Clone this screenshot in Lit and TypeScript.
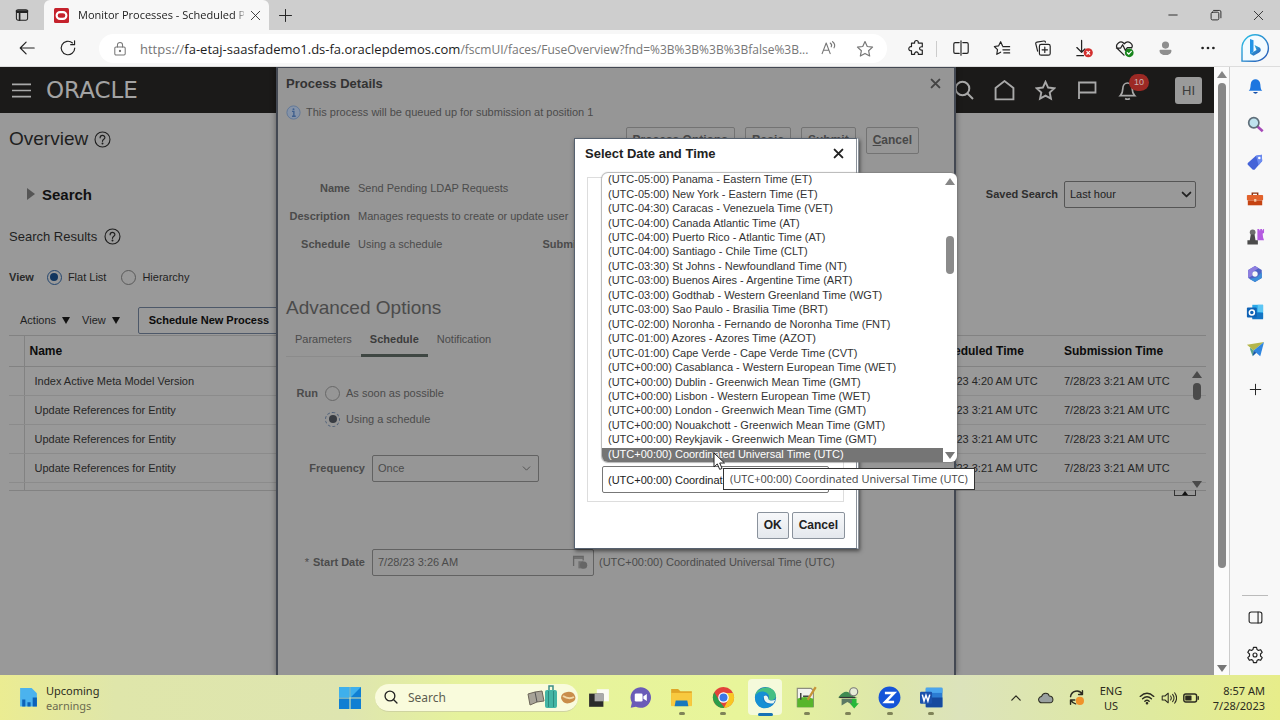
import { LitElement, html, css, svg } from "lit";
import { customElement } from "lit/decorators.js";
import { classMap } from "lit/directives/class-map.js";

const line = (body: unknown, size = 18) => html`<svg
  class="line" width=${size} height=${size} viewBox="0 0 20 20" aria-hidden="true">${body}</svg>`;
const art = (body: unknown, size = 18) => html`<svg
  width=${size} height=${size} viewBox="0 0 20 20" aria-hidden="true">${body}</svg>`;

const STAR = "M10 1.8 12.5 7.2 18.4 7.9 14 11.9 15.2 17.8 10 14.9 4.8 17.8 6 11.9 1.6 7.9 7.5 7.2Z";

const icons = {
  tabs: line(svg`<rect x="3" y="3.500" width="14" height="13" rx="2"/><path d="M3 5h14M3.500 6.500h13M7 6v10.500" stroke-width="2"/>`, 16),
  back: line(svg`<path d="M18 10H2.500M9 3.500 2.500 10 9 16.500"/>`),
  refresh: line(svg`<path d="M17.500 10A7.500 7.500 0 1 1 15 4.400M17.300 2v4.300H13"/>`),
  lock: line(svg`<rect x="3.500" y="7.500" width="13" height="10" rx="1.500"/><path d="M6.800 7.500V5a3.200 3.200 0 0 1 6.400 0v2.500"/><circle cx="10" cy="12.500" r=".8" fill="currentColor"/>`, 16),
  read: line(svg`<path d="m2.500 16 4.800-12.500L12 16M4.200 12h6.200M12 3.500c1.500 1 2 3 1.200 4.500M14.800 2c2.300 1.800 3 4.800 1.700 7.200"/>`, 17),
  star: line(svg`<path d=${STAR}/>`, 18),
  puzzle: line(svg`<path d="M5 4.500h3.500c-.8-3.800 4.800-3.800 4 0H17v4.200c-4-.8-4 4.400 0 3.600V17h-4.500c.8-3.500-4.800-3.500-4 0H5v-4c-4 .8-4-5.300 0-4.500Z"/>`),
  split: line(svg`<path d="M8 4H3.500a1.500 1.500 0 0 0-1.500 1.500v9A1.500 1.500 0 0 0 3.500 16H8M12 4h4.500A1.500 1.500 0 0 1 18 5.500v9a1.500 1.500 0 0 1-1.500 1.500H12M10 2v16"/>`),
  favs: line(svg`<path d="M10.500 7.500 8.500 3 6.300 7.600 1.500 8.300 5 11.800 4.200 17 8.500 14.600M11 8.500h7.500M11 12h7.500M12 15.500h6.500"/>`),
  collect: line(svg`<rect x="6" y="6" width="12" height="12" rx="2"/><path d="M12 9v6M9 12h6M4 13.500 2 5.500a1.500 1.500 0 0 1 1.200-2L11 2.200a1.500 1.500 0 0 1 1.700 1.300"/>`),
  download: line(svg`<path d="M8 1.500v12M3 9l5 5 3.500-3.500M3 17.500h7"/><circle cx="15" cy="14.500" r="4.800" fill="#d3302f" stroke="none"/><path d="m13.500 13 3 3m0-3-3 3" stroke="#fff"/>`, 19),
  heart: line(svg`<path d="M9.500 17 2.500 10C-.5 5.500 6 .5 9.800 5 13.600.5 20 5 17.500 9.500M1.500 9.500H6L8 6l3 6 2-3h4"/><circle cx="15" cy="14.500" r="4.600" fill="#17851c" stroke="none"/><path d="m13 14.500 1.500 1.500 2.700-3" stroke="#fff"/>`, 19),
  person: art(svg`<circle cx="10" cy="6" r="4.200" fill="#8e8e8e"/><path d="M3 12.500q0-1 1-1h12q1 0 1 1c0 7-14 7-14 0Z" fill="#8e8e8e"/>`, 17),
  dots: art(svg`<g fill="#222"><circle cx="4" cy="10" r="1.500"/><circle cx="10" cy="10" r="1.500"/><circle cx="16" cy="10" r="1.500"/></g>`),
  bing: html`<svg width="30" height="30" viewBox="0 0 30 30" aria-hidden="true"><defs><linearGradient id="bg" x2="1" y2="1"><stop stop-color="#2bc3e8"/><stop offset="1" stop-color="#2b56b5"/></linearGradient></defs><path d="M2 28V15a13.200 13.200 0 1 1 13.200 13.200Z" fill="#f3fbff" stroke="url(#bg)" stroke-width="1.400"/><path d="m10 6 3.500 1.300v11.200l-3.500 2.500Z" fill="#2394e6"/><path d="m14.500 12 5.500 2.700q2 3.300-1.200 5l-5.300 3.100-3.500-2 6.500-3.800Z" fill="url(#bg)"/></svg>`,
  minimize: line(svg`<path d="M4 10h12"/>`, 14),
  restore: line(svg`<rect x="3" y="6" width="11" height="11" rx="2"/><path d="M6.500 3.500H15a2 2 0 0 1 2 2V14"/>`, 14),
  close: line(svg`<path d="m3.500 3.500 13 13m0-13-13 13"/>`, 13),
  plus: line(svg`<path d="M10 2v16M2 10h16"/>`, 15),
  help: line(svg`<circle cx="10" cy="10" r="8.800"/><path d="M7.200 8c0-3.800 5.600-3.600 5.600-.3 0 2.200-2.800 2-2.800 4.500" stroke-width="1.400"/><circle cx="10" cy="14.800" r=".5" fill="currentColor"/>`, 17),
  menu: line(svg`<path d="M0 3.500h20M0 10h20M0 16.500h20" stroke-width="1.700"/>`, 19),
  search: line(svg`<circle cx="8.500" cy="8.500" r="6.800"/><path d="m13.500 13.500 5.500 5.500"/>`, 20),
  home: line(svg`<path d="M1.500 18.500V7.500L10 1l8.500 6.500v11Z"/>`, 21),
  flag: line(svg`<path d="M2 19V2.500h16.500v10H2"/>`, 20),
  bell: line(svg`<path d="M2.500 15.500c2-2 2.500-3 2.500-7C5 0 15 0 15 8.500c0 4 .5 5 2.500 7ZM7.500 18.500q2.500 1.500 5 0"/>`, 19),
  info: art(svg`<circle cx="10" cy="10" r="8.800" fill="#8593a8" stroke="#5f7697" stroke-width="1.200"/><path d="M8 8.500h2.500V15M8 15h5" stroke="#3f5f8d" stroke-width="1.800" fill="none"/><circle cx="10" cy="5.500" r="1.300" fill="#3f5f8d"/>`, 15),
  calendar: art(svg`<path d="M2 15V3h12v5M2 5h12" stroke="#666" stroke-width="1.600" fill="none"/><path d="M8 9h6v9H8z" fill="#707070"/><circle cx="14.500" cy="14" r="4.500" fill="#666"/>`, 16),
  panel: line(svg`<rect x="2.500" y="3.500" width="15" height="13" rx="2.500"/><path d="M13 3.500v13"/>`, 17),
  gear: line(svg`<path d="M8.300 1.500h3.400l.6 2.500 1.500.9 2.500-.8 1.700 3-1.900 1.800v2.200l1.900 1.800-1.700 3-2.500-.8-1.500.9-.6 2.500H8.300L7.700 16l-1.500-.9-2.500.8-1.700-3 1.900-1.800V8.900L2 7.100l1.700-3 2.500.8L7.700 4Z"/><circle cx="10" cy="10" r="2.200"/>`, 18),
};

const sideIcons: [string, unknown][] = [
  ["Notifications", art(svg`<path d="M2 15c2-1.500 2-4 2.300-7.500C5-.5 15-.5 15.700 7.500 16 11 16 13.500 18 15Z" fill="#1c76e0"/><path d="M7 16.500h6q-3 4-6 0" fill="#174fa8"/>`, 17)],
  ["Search", art(svg`<path d="m12 12 6.500 6" stroke="#a64ab8" stroke-width="3"/><circle cx="8" cy="8" r="6" fill="#bfe3ef" stroke="#5f6f7a" stroke-width="2"/>`, 17)],
  ["Shopping", art(svg`<path d="M2 11 11 3l6.500-1 .5 7-8.500 9.500q-1.500.5-2.500-.5l-5-5q-.6-1 0-2Z" fill="#4563d8"/><path d="m11 3 6.500-1 .5 7-4 4.500Z" fill="#6c8cf0"/><circle cx="14.800" cy="5.600" r="1.400" fill="#fff"/>`, 18)],
  ["Tools", art(svg`<path d="M7 6V3.500h6V6" fill="none" stroke="#8a3312" stroke-width="1.600"/><rect x="1" y="5.500" width="18" height="6" rx="1" fill="#e2622c"/><path d="M2 11.500h16V17H2z" fill="#c54312"/><path d="M9 10h2.500v3H9z" fill="#f5c9a5"/>`, 18)],
  ["Games", art(svg`<path d="M12 2h2v1.500h1V2h2v1.500h1V2h1v4l-1.500 1 .5 4 1 3h-7Z" fill="#b45be0"/><circle cx="7" cy="5.500" r="3" fill="#6d6d6d"/><path d="M5 8h4l1 6h2.500v4.500H1.500V14H4Z" fill="#4b4b4b"/>`, 19)],
  ["Microsoft 365", art(svg`<path d="m10 1 7.500 4.500v9L10 19l-7.500-4.500v-9Z" fill="#4e63c4"/><path d="M10 1 2.500 5.500v9L7 12V8l7-4.500Z" fill="#8f7ee0"/><path d="M17.500 8v6.500L10 19l-6-3.500 8-2Z" fill="#3d8fd8"/><circle cx="10" cy="10" r="3" fill="#f8f8f8"/>`, 18)],
  ["Outlook", art(svg`<path d="M7 2h12v15H7z" fill="#2aa8e8"/><path d="M13 2h6v8h-6z" fill="#5cc6f5"/><path d="m7 10 12 1v7H7Z" fill="#1474c4"/><rect x="1" y="5" width="11" height="11" rx="1" fill="#0f62b5"/><circle cx="6.500" cy="10.500" r="2.800" fill="none" stroke="#fff" stroke-width="1.700"/>`, 18)],
  ["Drop", art(svg`<path d="M1 5 19 2 8 11Z" fill="#b5b64b"/><path d="M19 2 15 17l-7-6Z" fill="#2f86e0"/><path d="m5 8.500 3 2.500-1 6-3-8Z" fill="#5aa58a"/><path d="m8 11 3 2.500-4 3.500Z" fill="#175aa8"/>`, 19)],
];

const taskIcons: [string, unknown, string][] = [
  ["Task view", art(svg`<path d="M8 2h11v11H8z" fill="#fbfbf4"/><path d="M1 6h13v12H1z" fill="#2b2b2b"/><path d="M6 6h8v7H6z" fill="#aaa"/>`, 22), ""],
  ["Chat", art(svg`<path d="M10 1a9 9 0 1 1-4 17l-4.500 1 1-4.500A9 9 0 0 1 10 1Z" fill="#6a5bb8"/><rect x="5" y="6.500" width="6.800" height="7" rx="1.200" fill="#fff"/><path d="m12.500 9 3-2v6l-3-2Z" fill="#fff"/>`, 23), ""],
  ["File Explorer", art(svg`<path d="M1 2.500h6l2 2h10V17H1Z" fill="#e0a526"/><path d="M1 6h18v11.500H1Z" fill="#f8c93f"/><path d="M5 12.500h10l1 5H4Z" fill="#1778bd"/>`, 23), "run"],
  ["Chrome", art(svg`<circle cx="10" cy="10" r="9.200" fill="#e2433a"/><path d="M2 5.400 7 14l4 5.100A9.200 9.200 0 0 1 2 5.400Z" fill="#2b9d4a"/><path d="M10 6h8.300a9.200 9.200 0 0 1-7.900 13.200L14 12Z" fill="#f9c623"/><circle cx="10" cy="10" r="4.600" fill="#fff"/><circle cx="10" cy="10" r="3.500" fill="#3a78e6"/>`, 23), "run"],
  ["Edge", art(svg`<circle cx="10" cy="10" r="9.200" fill="#1675c5"/><path d="M1 9C2-1 18-1 19 8c.5 4-4 5-6.500 4C15 5 5 4 1 9Z" fill="#45bf83"/><path d="M1 9c3-7 12-4 12 0-2-3-6-1-5 3 1 3 5 5 9 3-7 9-17 3-16-6Z" fill="#1590d4"/><path d="M8.500 9c2-2 4 0 4 2.500 1 1.500 4 1.500 6 .5l-1.500 3c-5 1-8.500-1-8.500-6Z" fill="#e9f6ee"/>`, 23), "active"],
  ["Notepad++", art(svg`<path d="M2 2h12l2 2v14H2Z" fill="#f3f3ee" stroke="#8c8c80"/><path d="M2 11q6-3 14 0v7.500H2Z" fill="#58b52c"/><path d="M5 6v6M7 9h5" stroke="#444" stroke-width="1.300"/><path d="m18 1-7 11" stroke="#c69436" stroke-width="2"/>`, 23), "run"],
  ["Network client", art(svg`<path d="M2 9Q8 1 14 9l4 1H1Z" fill="#3f8b52"/><path d="M4 11h12l-3 5-4-2-5 3Z" fill="#5c7a64"/><circle cx="14.500" cy="5" r="3.500" fill="#e6ecd6" stroke="#777"/><path d="M13 11h4v4h2l-4 4.500L11 15h2Z" fill="#27b83a"/><path d="M2 10h14" stroke="#333"/>`, 23), "run"],
  ["Zoom", art(svg`<circle cx="10" cy="10" r="9.500" fill="#1554d8"/><path d="M6 6h8L6.300 14H14" stroke="#fff" stroke-width="2.200" fill="none"/>`, 23), "run"],
  ["Word", art(svg`<rect x="5" y="1.500" width="14.500" height="17" rx="1" fill="#2b7cd3"/><path d="M5 10h14.500v8.500H5z" fill="#164a9e"/><path d="M5 1.500h14.500V6H5z" fill="#4aa5ee"/><rect x="0" y="5" width="10.500" height="10.500" rx="1" fill="#1b52ac"/><path d="m2 7.500 1.500 5.500 1.700-5 1.700 5 1.600-5.500" stroke="#fff" stroke-width="1.300" fill="none"/>`, 23), "run"],
];

const zones = [
  "(UTC-05:00) Panama - Eastern Time (ET)",
  "(UTC-05:00) New York - Eastern Time (ET)",
  "(UTC-04:30) Caracas - Venezuela Time (VET)",
  "(UTC-04:00) Canada Atlantic Time (AT)",
  "(UTC-04:00) Puerto Rico - Atlantic Time (AT)",
  "(UTC-04:00) Santiago - Chile Time (CLT)",
  "(UTC-03:30) St Johns - Newfoundland Time (NT)",
  "(UTC-03:00) Buenos Aires - Argentine Time (ART)",
  "(UTC-03:00) Godthab - Western Greenland Time (WGT)",
  "(UTC-03:00) Sao Paulo - Brasilia Time (BRT)",
  "(UTC-02:00) Noronha - Fernando de Noronha Time (FNT)",
  "(UTC-01:00) Azores - Azores Time (AZOT)",
  "(UTC-01:00) Cape Verde - Cape Verde Time (CVT)",
  "(UTC+00:00) Casablanca - Western European Time (WET)",
  "(UTC+00:00) Dublin - Greenwich Mean Time (GMT)",
  "(UTC+00:00) Lisbon - Western European Time (WET)",
  "(UTC+00:00) London - Greenwich Mean Time (GMT)",
  "(UTC+00:00) Nouakchott - Greenwich Mean Time (GMT)",
  "(UTC+00:00) Reykjavik - Greenwich Mean Time (GMT)",
  "(UTC+00:00) Coordinated Universal Time (UTC)",
];
const UTC = zones[zones.length - 1];

const rows = [
  ["Index Active Meta Model Version", "7/28/23 4:20 AM UTC", "7/28/23 3:21 AM UTC"],
  ["Update References for Entity", "7/28/23 3:21 AM UTC", "7/28/23 3:21 AM UTC"],
  ["Update References for Entity", "7/28/23 3:21 AM UTC", "7/28/23 3:21 AM UTC"],
  ["Update References for Entity", "7/28/23 3:21 AM UTC", "7/28/23 3:21 AM UTC"],
];

const base = css`
  :host, * { box-sizing: border-box; }
  button, input, select { font: inherit; color: inherit; margin: 0; }
  button { background: none; border: 0; padding: 0; }
  svg { display: block; flex: none; }
  .line { fill: none; stroke: currentColor; stroke-width: 1.3; stroke-linejoin: round; stroke-linecap: round; }
  .icon { display: grid; place-items: center; }
`;

@customElement("browser-bar")
export class BrowserBar extends LitElement {
  static styles = [base, css`
    :host { display: block; font-family: "Open Sans", sans-serif; font-size: 11px; color: #222; }
    .tabs { display: flex; height: 30px; background: #cecece; }
    .tabs > .icon { width: 44px; }
    .tab { display: flex; align-items: center; gap: 9px; width: 225px; padding: 0 7px 0 10px; background: #f7f7f7; border-radius: 6px 6px 0 0; }
    .title { flex: 1; margin-right: -4px; overflow: hidden; white-space: nowrap; height: 18px; line-height: 18px; mask-image: linear-gradient(90deg, #000 94%, #0004); }
    .tabs > .new { width: 33px; }
    .window { display: flex; margin-left: auto; }
    .window button { width: 43px; }
    .tools { display: flex; height: 37px; background: #f7f7f7; border-bottom: 1px solid #ddd; padding-left: 6px; }
    .tools .icon { width: 41px; }
    .address { flex: 1; display: flex; align-items: center; min-width: 0; height: 29px; margin: 4px 8px 0 11px; border-radius: 15px; background: #fff; color: #767676; }
    .address .url { flex: 1; min-width: 0; white-space: nowrap; overflow: hidden; font-size: 12px; }
    .scheme { font-size: 13px; }
    .address .host { color: #1c1c1c; }
    .address .read { width: 30px; }
    .address .icon:last-child { width: 44px; }
    .rule { width: 1px; height: 16px; margin: 11px 3px 0 0; background: #ccc; }
    .tools .more { width: 44px; }
    .tools .bing { width: 50px; }
  `];
  render() {
    return html`
      <div class="tabs">
        <button class="icon" aria-label="Tab actions">${icons.tabs}</button>
        <div class="tab">
          ${art(svg`<rect width="20" height="20" rx="2" fill="#c5222c"/><rect x="3.500" y="5.500" width="13" height="9" rx="4.500" fill="none" stroke="#fff" stroke-width="2.800"/>`, 15)}
          <span class="title">Monitor Processes - Scheduled P</span>
          <button class="icon" aria-label="Close tab">${icons.close}</button>
        </div>
        <button class="icon new" aria-label="New tab">${icons.plus}</button>
        <div class="window">
          <button class="icon" aria-label="Minimize">${icons.minimize}</button>
          <button class="icon" aria-label="Restore">${icons.restore}</button>
          <button class="icon" aria-label="Close">${icons.close}</button>
        </div>
      </div>
      <div class="tools">
        <button class="icon" aria-label="Back">${icons.back}</button>
        <button class="icon" aria-label="Refresh">${icons.refresh}</button>
        <div class="address">
          <span class="icon">${icons.lock}</span>
          <span class="url"><span class="scheme">https://<span class="host">fa-etaj-saasfademo1.ds-fa.oraclepdemos.com</span></span>/fscmUI/faces/FuseOverview?fnd=%3B%3B%3B%3Bfalse%3B...</span>
          <button class="icon read" aria-label="Read aloud">${icons.read}</button>
          <button class="icon" aria-label="Favorite">${icons.star}</button>
        </div>
        <button class="icon" aria-label="Extensions">${icons.puzzle}</button>
        <span class="rule"></span>
        <button class="icon" aria-label="Split screen">${icons.split}</button>
        <button class="icon" aria-label="Favorites">${icons.favs}</button>
        <button class="icon" aria-label="Collections">${icons.collect}</button>
        <button class="icon" aria-label="Downloads">${icons.download}</button>
        <button class="icon" aria-label="Browser essentials">${icons.heart}</button>
        <button class="icon" aria-label="Profile">${icons.person}</button>
        <button class="icon more" aria-label="Settings and more">${icons.dots}</button>
        <button class="icon bing" aria-label="Bing">${icons.bing}</button>
      </div>`;
  }
}

@customElement("browser-sidebar")
export class BrowserSidebar extends LitElement {
  static styles = [base, css`
    :host { display: flex; flex-direction: column; align-items: stretch; width: 51px; background: #f8f8f8; border-left: 1px solid #ccc; color: #222; padding-top: 1px; }
    .apps { display: flex; flex-direction: column; height: 300px; }
    .apps .icon { flex: 1; }
    .add { height: 42px; }
    hr { width: 26px; margin: auto auto 3px; border: 0; border-top: 1px solid #bbb; }
    .tool { height: 37px; }
    .tool:last-child { margin-bottom: 2px; }
  `];
  render() {
    return html`
      <div class="apps">${sideIcons.map(([n, i]) => html`<button class="icon" aria-label=${n}>${i}</button>`)}</div>
      <button class="icon add" aria-label="Customize">${line(svg`<path d="M10 3v14M3 10h14"/>`, 15)}</button>
      <hr />
      <button class="icon tool" aria-label="Hide sidebar">${icons.panel}</button>
      <button class="icon tool" aria-label="Settings">${icons.gear}</button>`;
  }
}

@customElement("task-bar")
export class TaskBar extends LitElement {
  static styles = [base, css`
    :host { display: flex; align-items: center; height: 45px; font-family: "Noto Sans", sans-serif; font-size: 11px; line-height: 15px; color: #2b2b20;
      background: linear-gradient(90deg, #ebec92, #dfe6aa 9%, #dee5b0 27%, #e6f29c 36%, #e8f59a 58%, #dde6ac 70%, #dce3bb 75%, #dfea9e 90%, #e7ed8a); }
    .left { flex: 1 1 0; display: flex; align-items: center; gap: 7px; padding-left: 18px; }
    .sub { color: #6b6b50; }
    .dock { display: flex; align-items: center; height: 45px; margin-right: 6px; }
    .start { width: 50px; }
    .find { display: flex; align-items: center; gap: 10px; width: 203px; height: 28px; padding: 0 2px 0 9px; border-radius: 14px; background: #f9fbdc; border-bottom: 1px solid #cfd4a0; color: #222; }
    .find input { flex: 1; width: 0; padding: 0; border: 0; outline: 0; background: none; font-size: 12px; }
    .find input::placeholder { color: #5d5d50; opacity: 1; }
    .apps { display: flex; width: 374px; }
    .app { flex: 1; height: 45px; display: grid; place-items: center; position: relative; }
    .app.active::before { content: ""; position: absolute; inset: 4px 4px 5px; border-radius: 4px; background: #f5fadb; }
    .app svg { position: relative; }
    .app.run::after, .app.active::after { content: ""; position: absolute; bottom: 5px; width: 6px; height: 3px; border-radius: 2px; background: #7f8358; }
    .app.active::after { width: 15px; background: #1572b5; bottom: 4px; }
    .tray { flex: 1 1 0; display: flex; align-items: center; justify-content: flex-end; padding-right: 15px; }
    .tray .icon { width: 30px; }
    .tray .small { width: 22px; }
    .lang { width: 40px; text-align: center; margin-right: 5px; }
    .clock { text-align: right; width: 63px; }
  `];
  render() {
    return html`
      <div class="left">
        ${art(svg`<path d="M2 1h11l5 5v12.500H2Z" fill="#4bb3ee"/><path d="M4 12h3v6.500H4zM9 14.500h3v4H9zM14 10h4v8.500h-4z" fill="#0c62b8"/>`, 21)}
        <div><div>Upcoming</div><div class="sub">earnings</div></div>
      </div>
      <div class="dock">
        <button class="icon start" aria-label="Start">${art(svg`<path d="M0 0h9.500v9.500H0zM10.500 0H20v9.500h-9.500zM0 10.500h9.500V20H0zM10.500 10.500H20V20h-9.500z" fill="#0f7fd3"/><path d="M0 0h9.500v9.500H0zM10.500 0H20l-9.500 9.500z" fill="#3eb0ec"/>`, 22)}</button>
        <label class="find">
          ${line(svg`<circle cx="8.500" cy="8.500" r="7" stroke-width="1.900"/><path d="m13.500 13.500 5 5" stroke-width="1.900"/>`, 14)}
          <input type="search" aria-label="Search" placeholder="Search" />
          <svg width="50" height="24" viewBox="0 0 50 24" aria-hidden="true"><path d="m2 9 7-2 7-1 2 10-7 1-7 3Z" fill="#a7a398" stroke="#6d6659"/><path d="m9 7 2 10" stroke="#555"/><path d="M23 6V1h4v5" fill="none" stroke="#3d8f86" stroke-width="1.500"/><rect x="19" y="5" width="12" height="18" rx="2" fill="#43b5a4"/><path d="M22.500 6v16M27.500 6v16" stroke="#2b8c7f"/><path d="M35 13q0-5 6-6t8 4-5 7-9-5Z" fill="#c98d4a"/><path d="M37 11q6 4 11 1" stroke="#f1d9a8" stroke-width="2" fill="none"/></svg>
        </label>
        <div class="apps">${taskIcons.map(([n, i, s]) => html`<button class=${classMap({ app: true, run: s === "run", active: s === "active" })} aria-label=${n}>${i}</button>`)}</div>
      </div>
      <div class="tray">
        <button class="icon" aria-label="Hidden icons">${line(svg`<path d="m4 13 6-6 6 6" stroke-width="1.800"/>`, 14)}</button>
        <span class="icon">${line(svg`<path d="M5 16a4 4 0 0 1-.5-8C6 3 13 3 14 7.500c6 0 6 8.500 1 8.500Z" fill="#99a0a0"/>`, 16)}</span>
        <span class="icon">${line(svg`<path d="M3 9C4 2 13 0 16.500 6M17 2v4.500h-4.500M3 18v-5h5M3.500 13.500q2 3.500 5.500 4" stroke-width="1.700"/><circle cx="14" cy="14" r="4.800" fill="#f0922a" stroke="none"/>`, 17)}</span>
        <span class="lang">ENG<br />US</span>
        <span class="icon small">${line(svg`<path d="M1.500 8q8.500-8 17 0M4.500 11q5.500-5 11 0M7.300 14q2.700-2.500 5.400 0" stroke-width="1.700"/><circle cx="10" cy="16.500" r="1" fill="currentColor"/>`, 16)}</span>
        <span class="icon small">${line(svg`<path d="M1.500 7.500H5L9 4v12l-4-3.500H1.500ZM12 7.500q1.800 2.500 0 5M14.500 5.500q3.500 4.500 0 9M17 3.500q5 6.500 0 13"/>`, 16)}</span>
        <span class="icon small">${line(svg`<rect x="1" y="5" width="16" height="10" rx="2.500" stroke-width="1.800"/><path d="M3.500 7.500H10v5H3.500z" fill="currentColor"/><path d="M19 8.500v3" stroke-width="1.800"/>`, 16)}</span>
        <span class="clock">8:57 AM<br />7/28/2023</span>
      </div>`;
  }
}

@customElement("process-page")
export class ProcessPage extends LitElement {
  static styles = [base, css`
    :host { display: block; position: relative; flex: 1; min-width: 0; overflow: hidden; background: #999; font-family: "Liberation Sans", Arial, sans-serif; font-size: 11px; color: #1f1f1f; }
    h1, h2, h3 { margin: 0; font-weight: 400; }
    .bar { display: flex; align-items: center; height: 46px; padding: 0 12px; background: #1b1a19; color: #a9a9a9; }
    .bar .line { stroke-width: 1.8; stroke-linecap: butt; stroke-linejoin: miter; }
    .bar .menu .line { stroke-width: 1.3; }
    .logo { margin-left: 15px; font: 23px/24px "DejaVu Sans", sans-serif; color: #a3a3a3; }
    .actions { display: flex; margin: 0 27px 0 auto; }
    .actions .icon { width: 41px; position: relative; }
    .actions .icon:first-child .line { stroke-width: 2; }
    .badge { position: absolute; left: 22px; top: -6px; width: 20px; height: 17px; border-radius: 9px; background: #9c2924; color: #c9b5b4; font-size: 9px; line-height: 17px; text-align: center; }
    .avatar { width: 27px; height: 27px; border-radius: 3px; background: #9a9a9a; color: #3c3c3c; font-size: 13px; }
    .body { padding: 0 8px 0 9px; }
    .row { display: flex; align-items: center; }
    .overview { height: 52px; gap: 6px; }
    .overview h1 { font-size: 19px; }
    .searchrow { height: 58px; padding: 0 10px 0 18px; font-weight: 700; }
    .searchrow h2 { font-size: 15px; font-weight: 700; margin-left: 7px; color: #111; }
    .tri { width: 0; height: 0; border: 6px solid transparent; border-left: 8px solid #555; border-right: 0; }
    .searchrow label { margin-left: auto; margin-right: 6px; color: #2e2e2e; }
    select, .text { appearance: none; border: 1px solid #555; border-radius: 2px; background: none; height: 27px; padding: 0 5px; }
    .pick { position: relative; display: flex; align-items: center; }
    .pick select { width: 100%; }
    .pick .line { position: absolute; right: 7px; pointer-events: none; }
    .saved { width: 132px; color: #222; font-weight: 400; }
    .saved .line { stroke-width: 2.8; right: 3px; }
    .results { height: 26px; gap: 7px; font-size: 13px; }
    .view { height: 56px; }
    .view b { margin-right: 13px; color: #2a2a2a; }
    .view label { display: flex; align-items: center; gap: 6px; margin-right: 15px; }
    input[type="radio"] { appearance: none; width: 15px; height: 15px; border: 1px solid #5a5a5a; border-radius: 50%; display: grid; place-items: center; }
    input[type="radio"]:checked { border-color: #24466f; }
    input[type="radio"]:checked::before { content: ""; width: 8px; height: 8px; border-radius: 50%; background: #12365f; }
    .commands { height: 30px; padding-left: 11px; gap: 12px; }
    .commands .menu { display: flex; align-items: center; gap: 6px; }
    .down { width: 0; height: 0; border: 4px solid transparent; border-top: 7px solid #111; border-bottom: 0; }
    .schedule { height: 27px; margin-left: 6px; padding: 0 10px; border: 1px solid #4d5869; border-radius: 2px; font-weight: 700; color: #0c0c0c; }
    .grid { position: relative; }
    table { width: 100%; border-collapse: collapse; table-layout: fixed; border-bottom: 1px solid #828282; }
    th { height: 31px; padding: 0 0 0 5px; font-size: 12px; text-align: left; color: #0c0c0c; border: solid #828282; border-width: 1px 0; }
    td { height: 29px; padding: 0 0 1px; border-bottom: 1px solid #8b8b8b; color: #262626; }
    .gutter { width: 15px; border-right: 1px solid #828282; }
    .name { padding-left: 10px; }
    .time { width: 132px; padding-left: 0; }
    .last { width: 142px; padding-left: 0; }
    .spacer td { height: 8px; border-bottom: 0; }
    .scroll { position: absolute; right: 4px; top: 36px; bottom: 3px; display: flex; flex-direction: column; align-items: center; gap: 5px; }
    .up, .dn { width: 0; height: 0; border: 5px solid transparent; border-top: 0; border-bottom: 7px solid #4a4a4a; }
    .dn { border-bottom: 0; border-top: 7px solid #4a4a4a; margin-top: auto; }
    .thumb { width: 8px; height: 17px; border-radius: 4px; background: #4a4a4a; }
    .handle { position: absolute; right: 10px; top: 155px; width: 22px; height: 6px; border: 1px solid #333; border-top: 0; display: grid; place-items: center; }
    .handle i { border: 3px solid transparent; border-top: 0; border-bottom: 4px solid #111; }

    .process { position: absolute; left: 276px; top: 0; bottom: 0; width: 680px; padding: 0 35px 0 8px; background: #969696; border: solid #434852; border-width: 1px 2px 0; box-shadow: 0 0 6px #0006; color: #4b4b4b; }
    .process .head { height: 30px; justify-content: space-between; color: #333; }
    .head h2 { font-size: 13px; font-weight: 700; }
    .head .line { stroke-width: 3; }
    .process .head .icon { margin-right: -23px; color: #444; }
    .note { height: 28px; gap: 5px; }
    .buttons { height: 28px; justify-content: flex-end; gap: 10px; }
    .btn { height: 27px; padding: 0 6px; border: 1px solid #737373; border-radius: 2px; font-size: 12px; font-weight: 700; }
    .buttons .btn { color: #484848; }
    .details { display: grid; grid-template-columns: 64px 1fr; column-gap: 8px; grid-auto-rows: 28px; align-items: center; margin: 20px 0 0; white-space: nowrap; }
    .details dt { text-align: right; font-weight: 700; }
    .details dd { margin: 0; display: flex; }
    .details dd b { margin-left: 100px; }
    .process h3 { height: 30px; line-height: 30px; margin-top: 35px; font-size: 19px; }
    .tabs { display: flex; height: 34px; }
    .tabs button { padding: 0 9px 2px; border-bottom: 1px solid #8b8b8b; }
    .tabs button.on { font-weight: 700; border-bottom: 3px solid #3f4743; color: #3c3c3c; padding-bottom: 0; }
    .tabs button:last-child { border-color: transparent; }
    .run { display: grid; grid-template-columns: 32px 1fr; column-gap: 7px; grid-auto-rows: 26px; align-items: center; margin: 23px 0 0; padding: 0; border: 0; }
    .run b { text-align: right; }
    .run label { grid-column: 2; display: flex; align-items: center; gap: 6px; }
    .process input[type="radio"] { border-color: #686868; }
    .process input[type="radio"]:checked { border: 1px dashed #4d5f78; }
    .process input[type="radio"]:checked::before { background: #383c42; }
    .process select, .process .text { border-color: #626262; }
    .field { height: 28px; margin-top: 22px; }
    .field > label { display: flex; justify-content: flex-end; gap: 4px; width: 79px; margin-right: 7px; font-weight: 700; }
    .field.start { margin-top: 66px; }
    .star { font-weight: 400; }
    .freq { width: 167px; }
    .freq .line { stroke-width: 1.6; }
    .date { position: relative; width: 222px; display: flex; align-items: center; margin-right: 5px; }
    .date .text { width: 100%; }
    .date svg { position: absolute; right: 6px; }

    .picker { position: absolute; left: 574px; top: 71px; width: 285px; height: 411px; display: flex; flex-direction: column; padding: 0 12px; background: #fff; border: 1px solid #56616f; border-right: 3px double #8b929b; box-shadow: 1px 2px 4px #0008; color: #222; }
    .picker .head { height: 29px; margin: 0 -1px 9px -2px; justify-content: space-between; }
    .zone { flex: 1; min-width: 0; margin: 0; border: 1px solid #ddd; padding: 0 14px 8px; display: flex; align-items: flex-end; }
    .zone select { width: 100%; border-color: #777; background: #fff; }
    .foot { height: 46px; justify-content: flex-end; gap: 3px; margin-right: -1px; }
    .foot .btn { border-color: #8a929c; background: linear-gradient(#f7f8fa, #e4e8ed); color: #222; }
    .list { position: absolute; left: 602px; top: 106px; width: 355px; height: 289px; display: flex; overflow: hidden; background: #fff; border-radius: 6px; box-shadow: 0 0 1px 1px #7778; color: #333; }
    .list ul { flex: 1; display: flex; flex-direction: column; margin: 0; padding: 0; list-style: none; }
    .list li { flex: 1; display: flex; align-items: center; min-height: 0; padding: 0 0 2px 6px; white-space: nowrap; }
    .list li.on { background: #757575; color: #fff; }
    .track { width: 14px; display: flex; flex-direction: column; align-items: center; padding: 5px 0 3px; }
    .track .up { border-bottom-color: #868686; }
    .track .dn { border-top-color: #777; }
    .track .thumb { height: 38px; margin-top: 51px; background: #8b8b8b; }
    .tip { position: absolute; left: 723px; top: 401px; height: 22px; padding: 0 6px; border: 1px solid #333; background: #fff; color: #444; font: 11px/20px "Open Sans", sans-serif; white-space: nowrap; }
    .cursor { position: absolute; left: 713px; top: 385px; }
  `];
  render() {
    const caret = (size = 11) => line(svg`<path d="m4 7 6 6 6-6"/>`, size);
    return html`
      <header class="bar">
        <button class="icon menu" aria-label="Navigator">${icons.menu}</button>
        <span class="logo">ORACLE</span>
        <nav class="actions">
          <button class="icon" aria-label="Search">${icons.search}</button>
          <button class="icon" aria-label="Home">${icons.home}</button>
          <button class="icon" aria-label="Favorites">${line(svg`<path d=${STAR}/>`, 21)}</button>
          <button class="icon" aria-label="Watchlist">${icons.flag}</button>
          <button class="icon" aria-label="Notifications">${icons.bell}<span class="badge">10</span></button>
        </nav>
        <button class="avatar">HI</button>
      </header>
      <main class="body">
        <div class="row overview"><h1>Overview</h1>${icons.help}</div>
        <div class="row searchrow">
          <button class="icon" aria-label="Expand search"><i class="tri"></i></button>
          <h2>Search</h2>
          <label for="saved">Saved Search</label>
          <span class="pick saved"><select id="saved"><option>Last hour</option></select>${caret(13)}</span>
        </div>
        <div class="row results"><h2 class="results row">Search Results</h2>${icons.help}</div>
        <div class="row view">
          <b>View</b>
          <label><input type="radio" name="view" checked />Flat List</label>
          <label><input type="radio" name="view" />Hierarchy</label>
        </div>
        <div class="row commands">
          <button class="menu">Actions<i class="down"></i></button>
          <button class="menu">View<i class="down"></i></button>
          <button class="schedule">Schedule New Process</button>
        </div>
        <div class="grid">
          <table>
            <thead><tr><th class="gutter"></th><th>Name</th><th class="time">Scheduled Time</th><th class="last">Submission Time</th></tr></thead>
            <tbody>
              ${rows.map(([n, s, t]) => html`<tr><td class="gutter"></td><td class="name">${n}</td><td class="time">${s}</td><td class="last">${t}</td></tr>`)}
              <tr class="spacer"><td class="gutter"></td><td></td><td></td><td></td></tr>
            </tbody>
          </table>
          <div class="scroll"><i class="up"></i><i class="thumb"></i><i class="dn"></i></div>
          <button class="handle" aria-label="Collapse pane"><i></i></button>
        </div>
      </main>

      <section class="process" role="dialog" aria-label="Process Details">
        <div class="row head"><h2>Process Details</h2><button class="icon" aria-label="Close">${line(svg`<path d="m4 4 12 12m0-12L4 16"/>`, 13)}</button></div>
        <div class="row note">${icons.info}<span>This process will be queued up for submission at position 1</span></div>
        <div class="row buttons">
          <button class="btn">Process Options</button>
          <button class="btn">Basic</button>
          <button class="btn">Sub<u>m</u>it</button>
          <button class="btn"><u>C</u>ancel</button>
        </div>
        <dl class="details">
          <dt>Name</dt><dd>Send Pending LDAP Requests</dd>
          <dt>Description</dt><dd>Manages requests to create or update user</dd>
          <dt>Schedule</dt><dd>Using a schedule<b>Submission</b></dd>
        </dl>
        <h3>Advanced Options</h3>
        <div class="tabs" role="tablist">
          <button role="tab">Parameters</button>
          <button role="tab" class="on" aria-selected="true">Schedule</button>
          <button role="tab">Notification</button>
        </div>
        <div class="run" role="radiogroup" aria-label="Run">
          <b>Run</b>
          <label><input type="radio" name="run" />As soon as possible</label>
          <label><input type="radio" name="run" checked />Using a schedule</label>
        </div>
        <div class="row field">
          <label for="freq">Frequency</label>
          <span class="pick freq"><select id="freq"><option>Once</option></select>${caret()}</span>
        </div>
        <div class="row field start">
          <label for="start"><span class="star">*</span>Start Date</label>
          <span class="date"><input id="start" class="text" type="text" value="7/28/23 3:26 AM" />${icons.calendar}</span>
          <span>${UTC}</span>
        </div>
      </section>

      <section class="picker" role="dialog" aria-label="Select Date and Time">
        <div class="row head"><h2>Select Date and Time</h2><button class="icon" aria-label="Close">${line(svg`<path d="m4 4 12 12m0-12L4 16"/>`, 13)}</button></div>
        <fieldset class="zone"><select aria-label="Time Zone"><option>${UTC}</option></select></fieldset>
        <div class="row foot"><button class="btn">OK</button><button class="btn">Cancel</button></div>
      </section>
      <div class="list">
        <ul role="listbox" aria-label="Time Zone">
          ${zones.map((z) => html`<li role="option" aria-selected=${z === UTC} class=${classMap({ on: z === UTC })}>${z}</li>`)}
        </ul>
        <div class="track"><i class="up"></i><i class="thumb"></i><i class="dn"></i></div>
      </div>
      <div class="tip" role="tooltip">${UTC}</div>
      <svg class="cursor" width="13" height="19" viewBox="0 0 13 19" aria-hidden="true"><path d="M1 1v14l3.300-3.100 2.400 5.500 2.400-1L6.700 11h4.800Z" fill="#fff" stroke="#222"/></svg>`;
  }
}

@customElement("app-root")
export class AppRoot extends LitElement {
  static styles = css`
    :host { display: flex; flex-direction: column; height: 100vh; overflow: hidden; }
    .middle { flex: 1; display: flex; min-height: 0; }
    .scrollbar { box-sizing: border-box; display: flex; flex-direction: column; align-items: center; width: 15px; padding: 4px 0 3px; background: #fbfbfb; gap: 5px; }
    .up, .dn { width: 0; height: 0; border: 5px solid transparent; border-top: 0; border-bottom: 7px solid #858585; }
    .dn { border-bottom: 0; border-top: 7px solid #777; }
    .rail { flex: 1; }
    .thumb { width: 8px; height: 84%; border-radius: 4px; background: #888; }
  `;
  render() {
    return html`
      <browser-bar></browser-bar>
      <div class="middle">
        <process-page></process-page>
        <div class="scrollbar"><i class="up"></i><div class="rail"><div class="thumb"></div></div><i class="dn"></i></div>
        <browser-sidebar></browser-sidebar>
      </div>
      <task-bar></task-bar>`;
  }
}
